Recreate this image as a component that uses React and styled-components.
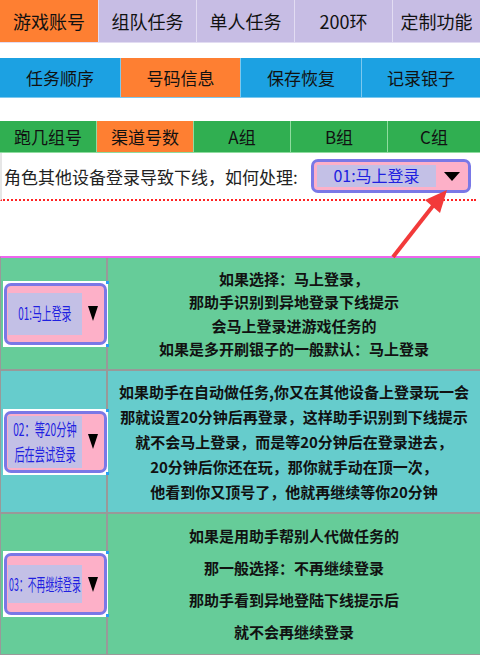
import React from "react";
import styled, { createGlobalStyle } from "styled-components";

const Global = createGlobalStyle`
  body {
    margin: 0;
    background: #fff;
    font-family: "Noto Sans CJK SC", "Noto Sans", sans-serif;
  }
`;

const colors = {
  orange: "#fe7f32",
  lilac: "#c7bde4",
  blue: "#1ca1e2",
  green: "#30af51",
};

const Page = styled.div`
  position: relative;
  width: 480px;
  height: 655px;
  overflow: hidden;
`;

const TabRow = styled.div`
  display: grid;
  grid-template-columns: ${(p) => p.cols};
  height: ${(p) => p.h}px;
  margin-top: ${(p) => p.top || 0}px;
`;

const Tab = styled.div`
  display: flex;
  align-items: center;
  justify-content: center;
  background: ${(p) => p.bg};
  border-right: 1px solid ${(p) => p.line};
  border-bottom: 1px solid ${(p) => p.line};
  font-size: ${(p) => p.fs || 17}px;
  color: #111;
  &:last-child {
    border-right: none;
  }
`;

const Question = styled.div`
  display: flex;
  align-items: center;
  justify-content: space-between;
  height: 46px;
  padding: 0 5px 0 2px;
  border-left: 2px solid #e6e6e6;
  border-bottom: 2px dotted #f22;
  margin-right: 4px;
  font-size: 17px;
  color: #222;
`;

const Select = styled.div`
  display: flex;
  align-items: center;
  box-sizing: border-box;
  width: ${(p) => p.w}px;
  height: ${(p) => p.h}px;
  padding-left: ${(p) => p.pl}px;
  background: #fdb0c8;
  border: 3px solid #7a78e6;
  border-radius: 7px;
`;

const SelectLabel = styled.div`
  width: ${(p) => p.lw}px;
  flex-shrink: 0;
  display: flex;
  flex-direction: column;
  align-items: center;
  justify-content: center;
  align-self: stretch;
  margin: ${(p) => p.my || 3}px 0;
  background: #c3c0e6;
  color: #2020e0;
  font-size: ${(p) => p.fs}px;
  line-height: ${(p) => p.lh || 1.2};
  white-space: nowrap;
`;

const Squeeze = styled.span`
  display: inline-block;
  transform: scaleX(${(p) => p.sx || 1});
`;

const CaretBox = styled.div`
  flex: 1;
  display: flex;
  align-items: center;
  justify-content: center;
`;

const Caret = styled.span`
  width: 0;
  height: 0;
  border-left: ${(p) => p.w / 2}px solid transparent;
  border-right: ${(p) => p.w / 2}px solid transparent;
  border-top: ${(p) => p.h}px solid #000;
`;

const Table = styled.div`
  margin-top: 55px;
  width: 479px;
  border-top: 2px solid #ee66ee;
  border-left: 1px solid #999;
  border-right: 1px solid #999;
`;

const Row = styled.div`
  display: grid;
  grid-template-columns: 107px 1fr;
  height: ${(p) => p.h}px;
  background: ${(p) => p.bg};
  border-bottom: 2px solid #999;
`;

const LeftCell = styled.div`
  display: flex;
  align-items: center;
  padding-left: 2px;
  border-right: 2px solid #999;
`;

const Frame = styled.div`
  position: relative;
  background: #fff;
  padding: 2px 1px;
  &::before,
  &::after {
    content: "";
    position: absolute;
    right: -1px;
    width: 3px;
    height: 3px;
    background: #2a9df4;
  }
  &::before { top: 0; }
  &::after { bottom: 0; }
`;

const Text = styled.div`
  display: flex;
  flex-direction: column;
  align-items: center;
  justify-content: center;
  font-size: 15px;
  font-weight: bold;
  line-height: ${(p) => p.lh}px;
  color: #111;
  text-align: center;
  white-space: nowrap;
`;

const Arrow = styled.svg`
  position: absolute;
  left: 380px;
  top: 185px;
`;

const topTabs = [
  ["游戏账号", colors.orange],
  ["组队任务", colors.lilac],
  ["单人任务", colors.lilac],
  ["200环", colors.lilac],
  ["定制功能", colors.lilac],
];

const midTabs = [
  ["任务顺序", colors.blue],
  ["号码信息", colors.orange],
  ["保存恢复", colors.blue],
  ["记录银子", colors.blue],
];

const groupTabs = [
  ["跑几组号", colors.green],
  ["渠道号数", colors.orange],
  ["A组", colors.green],
  ["B组", colors.green],
  ["C组", colors.green],
];

const rows = [
  {
    bg: "#66cc99",
    h: 111,
    lh: 23.5,
    sx: 0.58,
    my: 7,
    label: ["01:马上登录"],
    lines: [
      "如果选择：马上登录，",
      "那助手识别到异地登录下线提示",
      "会马上登录进游戏任务的",
      "如果是多开刷银子的一般默认：马上登录",
    ],
  },
  {
    bg: "#66cccc",
    h: 141,
    lh: 25,
    sx: 0.6,
    my: 2,
    label: ["02：等20分钟", "后在尝试登录"],
    lines: [
      "如果助手在自动做任务,你又在其他设备上登录玩一会",
      "那就设置20分钟后再登录，这样助手识别到下线提示",
      "就不会马上登录，而是等20分钟后在登录进去，",
      "20分钟后你还在玩，那你就手动在顶一次，",
      "他看到你又顶号了，他就再继续等你20分钟",
    ],
  },
  {
    bg: "#66cc99",
    h: 140,
    lh: 32,
    sx: 0.52,
    my: 9,
    label: ["03：不再继续登录"],
    lines: [
      "如果是用助手帮别人代做任务的",
      "那一般选择：不再继续登录",
      "那助手看到异地登陆下线提示后",
      "就不会再继续登录",
    ],
  },
];

export default function App() {
  return (
    <Page>
      <Global />
      <TabRow cols="99px 98px 98px 98px 1fr" h={43}>
        {topTabs.map(([t, c]) => (
          <Tab key={t} bg={c} line="#e2dcf2" fs={18}>{t}</Tab>
        ))}
      </TabRow>
      <TabRow cols="121px 120px 121px 1fr" h={40} top={15}>
        {midTabs.map(([t, c]) => (
          <Tab key={t} bg={c} line="#7cc8ee">{t}</Tab>
        ))}
      </TabRow>
      <TabRow cols="97px 97px 97px 97px 1fr" h={32} top={23}>
        {groupTabs.map(([t, c]) => (
          <Tab key={t} bg={c} line="#8fdc9f">{t}</Tab>
        ))}
      </TabRow>
      <Question>
        <span>角色其他设备登录导致下线，如何处理:</span>
        <Select w={160} h={34} pl={3}>
          <SelectLabel lw={119} fs={16}>01:马上登录</SelectLabel>
          <CaretBox>
            <Caret w={16} h={9} />
          </CaretBox>
        </Select>
      </Question>
      <Table>
        {rows.map((r) => (
          <Row key={r.label[0]} bg={r.bg} h={r.h}>
            <LeftCell>
              <Frame>
                <Select w={103} h={62} pl={1}>
                  <SelectLabel lw={74} fs={17} my={r.my} lh={1.45}>
                    {r.label.map((l) => (
                      <Squeeze key={l} sx={r.sx}>{l}</Squeeze>
                    ))}
                  </SelectLabel>
                  <CaretBox>
                    <Caret w={11} h={15} />
                  </CaretBox>
                </Select>
              </Frame>
            </LeftCell>
            <Text lh={r.lh}>
              {r.lines.map((l) => (
                <div key={l}>{l}</div>
              ))}
            </Text>
          </Row>
        ))}
      </Table>
      <Arrow width="80" height="80" viewBox="0 0 80 80">
        <line x1="13" y1="72" x2="56" y2="17" stroke="#f23a3a" strokeWidth="4" />
        <polygon points="67,5 45,15 60,28" fill="#f23a3a" />
      </Arrow>
    </Page>
  );
}
